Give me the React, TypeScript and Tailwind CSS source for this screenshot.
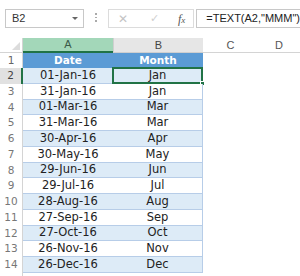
const rows = [
  { d: '01-Jan-16', m: 'Jan', h: 16 },
  { d: '31-Jan-16', m: 'Jan', h: 16 },
  { d: '01-Mar-16', m: 'Mar', h: 15 },
  { d: '31-Mar-16', m: 'Mar', h: 16 },
  { d: '30-Apr-16', m: 'Apr', h: 16 },
  { d: '30-May-16', m: 'May', h: 16 },
  { d: '29-Jun-16', m: 'Jun', h: 15 },
  { d: '29-Jul-16', m: 'Jul', h: 16 },
  { d: '28-Aug-16', m: 'Aug', h: 16 },
  { d: '27-Sep-16', m: 'Sep', h: 16 },
  { d: '27-Oct-16', m: 'Oct', h: 15 },
  { d: '26-Nov-16', m: 'Nov', h: 16 },
  { d: '26-Dec-16', m: 'Dec', h: 16 },
]

const cellFont = "font-['DejaVu_Sans',sans-serif]"

export default function App() {
  return (
    <div className="relative h-[276px] w-[300px] overflow-hidden bg-white text-[#222]">
      {/* Formula bar */}
      <div className="flex h-[38px] items-start pt-[9px] pl-[5px]">
        <div className="flex h-[19px] w-[80px] items-center justify-between border border-[#c8c8c8] pl-[6px] pr-[5px]">
          <span className="font-['Liberation_Sans',sans-serif] text-[11px] text-[#333]">B2</span>
          <span className="h-0 w-0 border-x-[3px] border-t-[3px] border-x-transparent border-t-[#666]" />
        </div>
        <div className="ml-[11px] mt-[4px] flex flex-col gap-[2px]">
          <span className="size-[1.5px] bg-[#aaa]" />
          <span className="size-[1.5px] bg-[#aaa]" />
          <span className="size-[1.5px] bg-[#aaa]" />
        </div>
        <div className="ml-[11px] flex h-[19px] w-[87px] items-center border border-[#dcdcdc] font-['Liberation_Sans',sans-serif]">
          <span className="ml-[9px] text-[12px] leading-none text-[#c4c4c4]">✕</span>
          <span className="ml-[22px] text-[11px] leading-none text-[#d0d0d0]">✓</span>
          <span className="ml-[19px] font-['Liberation_Serif',serif] text-[12px] italic leading-none text-[#555]">
            f<span className="text-[9px]">x</span>
          </span>
        </div>
        <div className="ml-[2px] flex h-[19px] flex-1 items-center border border-r-0 border-[#c8c8c8] pl-[9px] font-['Liberation_Sans',sans-serif] text-[11px] text-[#222]">
          =TEXT(A2,"MMM")
        </div>
      </div>

      {/* Column headers */}
      <div className="flex h-[15px] font-['Liberation_Sans',sans-serif] text-[11px]">
        <div className="relative w-[23px] border-r border-b border-[#d4d4d4] bg-white">
          <span className="absolute right-[2px] bottom-[2px] h-0 w-0 border-l-[8px] border-t-[8px] border-l-transparent border-t-transparent border-b-0 border-r-0 [border-bottom:8px_solid_#dcdcdc] [border-left:8px_solid_transparent]" />
        </div>
        <div className="flex w-[90px] items-center justify-center border-b-2 border-[#217346] bg-[#a3d7b9] text-[#3b5a48]">A</div>
        <div className="flex w-[90px] items-center justify-center border-b border-l border-[#cfcfcf] bg-[#e6e6e6] text-[#444]">B</div>
        <div className="flex w-[55px] items-center justify-center border-b border-[#d4d4d4] text-[#555]">C</div>
        <div className="flex flex-1 items-center justify-center border-b border-[#d4d4d4] text-[#555]">D</div>
      </div>

      {/* Row 1 header */}
      <div className={`flex h-[15px] ${cellFont}`}>
        <div className="flex w-[23px] items-center justify-center border-r border-[#d4d4d4] text-[10.5px] text-[#666]">1</div>
        <div className="flex w-[90px] items-center justify-center bg-[#5b9bd5] text-[10.5px] font-bold text-white">Date</div>
        <div className="flex w-[90px] items-center justify-center bg-[#5b9bd5] text-[10.5px] font-bold text-white">Month</div>
      </div>

      {rows.map((r, i) => {
        const n = i + 2
        const even = n % 2 === 0
        const sel = n === 2
        return (
          <div key={n} className={`flex ${cellFont}`} style={{ height: r.h }}>
            <div
              className={`flex w-[23px] items-center justify-center text-[10.5px] ${
                sel ? 'border-r-2 border-[#217346] bg-[#e1e1e1] text-[#444]' : 'border-r border-[#d4d4d4] text-[#777]'
              }`}
            >
              {n}
            </div>
            <div
              className={`flex w-[90px] items-center justify-center border-b border-[#b7cde8] text-[11.5px] ${
                even ? 'bg-[#ddebf7]' : 'bg-white'
              }`}
            >
              {r.d}
            </div>
            <div
              className={`relative flex w-[90px] items-center justify-center border-r border-b border-[#b7cde8] text-[11.5px] ${
                even ? 'bg-[#ddebf7]' : 'bg-white'
              }`}
            >
              {r.m}
              {sel && (
                <>
                  <span className="absolute -top-[1px] -left-[1px] -right-[1px] -bottom-[1px] border-2 border-[#217346]" />
                  <span className="absolute -right-[3px] -bottom-[3px] size-[5px] border border-white bg-[#217346]" />
                </>
              )}
            </div>
          </div>
        )
      })}

      <div className="flex h-[3px]">
        <div className="w-[23px] border-r border-[#d4d4d4]" />
      </div>
    </div>
  )
}
